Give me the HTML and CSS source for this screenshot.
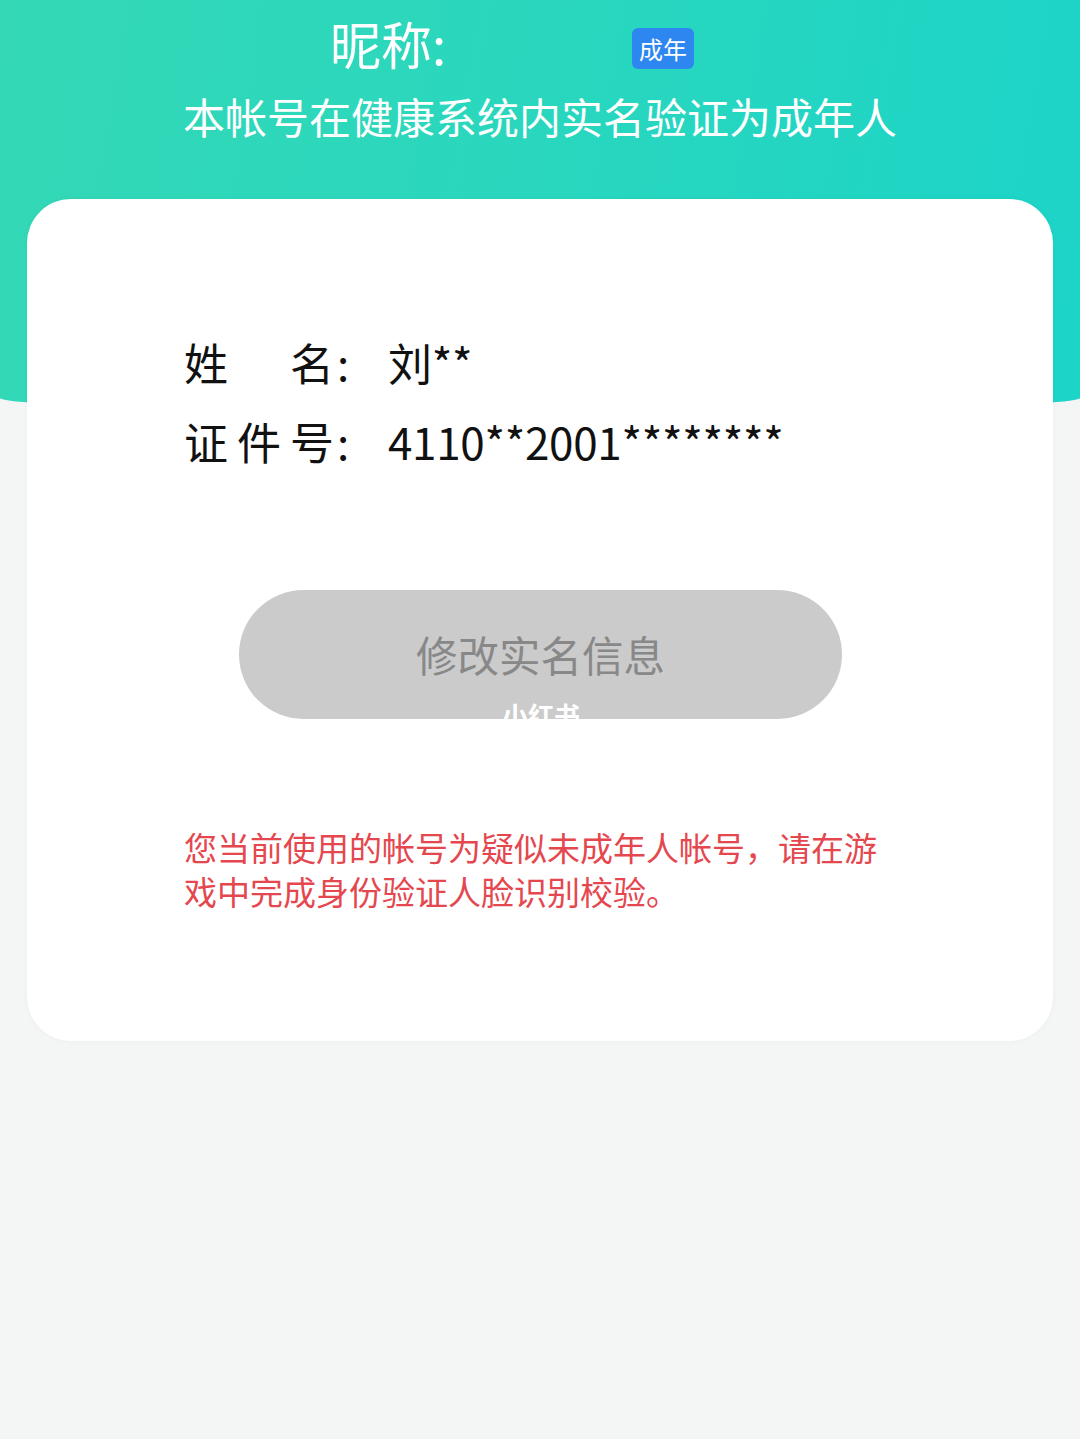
FILE: index.html
```html
<!DOCTYPE html>
<html lang="zh-CN">
<head>
<meta charset="utf-8">
<title>实名信息</title>
<link rel="stylesheet" href="styles.css">
</head>
<body>
<div class="page">
  <header class="hero">
    <div class="nick-row">
      <span class="nick-label">昵称:</span>
      <span class="badge">成年</span>
    </div>
    <p class="hero-sub">本帐号在健康系统内实名验证为成年人</p>
  </header>

  <section class="card">
    <div class="info">
      <div class="info-row">
        <span class="label"><span class="label-chars"><i>姓</i><i>名</i></span><span class="colon">:</span></span>
        <span class="value">刘**</span>
      </div>
      <div class="info-row">
        <span class="label"><span class="label-chars"><i>证</i><i>件</i><i>号</i></span><span class="colon">:</span></span>
        <span class="value">4110**2001********</span>
      </div>
    </div>

    <div class="btn-wrap">
      <button class="btn" type="button">修改实名信息<span class="watermark">小红书</span></button>
    </div>

    <p class="notice">您当前使用的帐号为疑似未成年人帐号，请在游戏中完成身份验证人脸识别校验。</p>
  </section>
</div>
</body>
</html>
```

FILE: styles.css
```css
html, body {
  margin: 0;
  padding: 0;
  background: #f4f5f5;
}

body {
  font-family: "Noto Sans CJK SC", "Noto Sans", sans-serif;
  width: 1080px;
  height: 1439px;
  overflow: hidden;
}

.page {
  width: 1080px;
}

.hero {
  height: 412px;
  background: linear-gradient(100deg, #34d8b6 0%, #2ad7bd 45%, #1cd4c8 100%);
  border-bottom-left-radius: 540px 14px;
  border-bottom-right-radius: 540px 14px;
  color: #ffffff;
  box-sizing: border-box;
  padding-top: 14px;
}

.nick-row {
  display: flex;
  align-items: center;
  padding-left: 330px;
  height: 62px;
}

.nick-label {
  font-size: 51px;
  line-height: 62px;
  width: 302px;
  margin-top: -4px;
}

.badge {
  background: #2e86f1;
  color: #ffffff;
  font-size: 24px;
  line-height: 41px;
  height: 41px;
  padding: 0 7px;
  border-radius: 6px;
  margin-top: 6px;
}

.hero-sub {
  margin: 12px 0 0;
  text-align: center;
  font-size: 42px;
  line-height: 56px;
}

.card {
  position: relative;
  margin: -213px 27px 0;
  background: #ffffff;
  border-radius: 44px;
  padding: 123px 0 128px 157px;
  box-shadow: 0 0 6px rgba(0, 0, 0, 0.03);
}

.info-row {
  display: flex;
  align-items: center;
  height: 79px;
  font-size: 44px;
  color: #111111;
}

.label {
  display: flex;
  width: 204px;
  flex: none;
}

.label-chars {
  display: flex;
  justify-content: space-between;
  width: 150px;
}

.label-chars i {
  font-style: normal;
}

.colon {
  padding-left: 3px;
}

.value {
  letter-spacing: -0.3px;
}

.btn-wrap {
  margin-top: 110px;
  padding-left: 55px;
}

.btn {
  position: relative;
  overflow: hidden;
  display: block;
  width: 603px;
  height: 129px;
  border: none;
  border-radius: 65px;
  background: #cbcbcb;
  color: #888888;
  font-family: "Noto Sans CJK SC", "Noto Sans", sans-serif;
  font-size: 41.5px;
  padding: 0;
  line-height: 129px;
  text-align: center;
}

.watermark {
  position: absolute;
  left: 263px;
  top: 110px;
  font-size: 26px;
  line-height: 30px;
  font-weight: 700;
  color: #ffffff;
}

.notice {
  margin: 106px 0 0;
  width: 700px;
  font-size: 33px;
  line-height: 44px;
  color: #e5474f;
}
```
